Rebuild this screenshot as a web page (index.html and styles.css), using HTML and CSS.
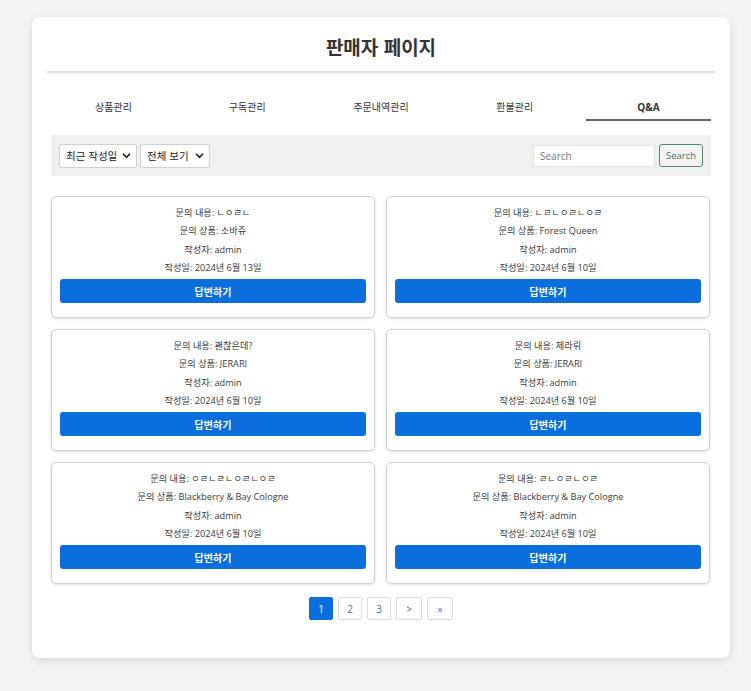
FILE: index.html
```html
<!DOCTYPE html>
<html lang="ko">
<head>
<meta charset="utf-8">
<title>판매자 페이지</title>
<link rel="stylesheet" href="styles.css">
</head>
<body>
<div class="page">
  <h1 class="title">판매자 페이지</h1>
  <hr class="divider">
  <nav class="tabs">
    <a class="tab">상품관리</a>
    <a class="tab">구독관리</a>
    <a class="tab">주문내역관리</a>
    <a class="tab">환불관리</a>
    <a class="tab active">Q&amp;A</a>
  </nav>
  <div class="filters">
    <div class="selects">
      <div class="select sel-date">최근 작성일<svg viewBox="0 0 10 8" class="chev"><path d="M1 2l4 4 4-4" fill="none" stroke="#222" stroke-width="2"/></svg></div>
      <div class="select sel-all">전체 보기<svg viewBox="0 0 10 8" class="chev"><path d="M1 2l4 4 4-4" fill="none" stroke="#222" stroke-width="2"/></svg></div>
    </div>
    <div class="search">
      <div class="search-input">Search</div>
      <button class="search-btn">Search</button>
    </div>
  </div>
  <div class="cards">
    <div class="card">
      <p>문의 내용: ㄴㅇㄹㄴ</p>
      <p>문의 상품: 소바쥬</p>
      <p>작성자: admin</p>
      <p>작성일: 2024년 6월 13일</p>
      <button class="answer">답변하기</button>
    </div>
    <div class="card">
      <p>문의 내용: ㄴㄹㄴㅇㄹㄴㅇㄹ</p>
      <p>문의 상품: Forest Queen</p>
      <p>작성자: admin</p>
      <p>작성일: 2024년 6월 10일</p>
      <button class="answer">답변하기</button>
    </div>
    <div class="card">
      <p>문의 내용: 괜찮은데?</p>
      <p>문의 상품: JERARI</p>
      <p>작성자: admin</p>
      <p>작성일: 2024년 6월 10일</p>
      <button class="answer">답변하기</button>
    </div>
    <div class="card">
      <p>문의 내용: 제라뤼</p>
      <p>문의 상품: JERARI</p>
      <p>작성자: admin</p>
      <p>작성일: 2024년 6월 10일</p>
      <button class="answer">답변하기</button>
    </div>
    <div class="card">
      <p>문의 내용: ㅇㄹㄴㄹㄴㅇㄹㄴㅇㄹ</p>
      <p>문의 상품: Blackberry &amp; Bay Cologne</p>
      <p>작성자: admin</p>
      <p>작성일: 2024년 6월 10일</p>
      <button class="answer">답변하기</button>
    </div>
    <div class="card">
      <p>문의 내용: ㄹㄴㅇㄹㄴㅇㄹ</p>
      <p>문의 상품: Blackberry &amp; Bay Cologne</p>
      <p>작성자: admin</p>
      <p>작성일: 2024년 6월 10일</p>
      <button class="answer">답변하기</button>
    </div>
  </div>
  <div class="pager">
    <a class="pg active">1</a>
    <a class="pg">2</a>
    <a class="pg">3</a>
    <a class="pg wide">&gt;</a>
    <a class="pg wide">»</a>
  </div>
</div>
</body>
</html>
```
FILE: styles.css
```css
* { box-sizing: border-box; }
html, body { margin: 0; padding: 0; }
body {
  background: #f3f4f6;
  font-family: "Open Sans", "Noto Sans CJK KR", sans-serif;
  color: #333;
  width: 751px;
  height: 691px;
  overflow: hidden;
}
.page {
  margin: 17px 0 0 32px;
  width: 698px;
  height: 641px;
  background: #fff;
  border-radius: 8px;
  box-shadow: 0 3px 10px rgba(0,0,0,0.12);
  padding: 0 19px;
}
.title {
  margin: 0;
  padding-top: 17px;
  height: 54px;
  text-align: center;
  font-family: "Noto Sans CJK KR", sans-serif;
  font-size: 19px;
  font-weight: 700;
  color: #333;
  line-height: 26px;
}
.divider {
  margin: 0 -4px;
  border: 0;
  height: 2px;
  background: #e2e2e2;
  box-shadow: 0 1px 2px rgba(0,0,0,0.08);
}
.tabs {
  display: flex;
  justify-content: space-between;
  margin-top: 27px;
}
.tab {
  width: 125px;
  text-align: center;
  font-family: "Noto Sans CJK KR", sans-serif;
  font-size: 10px;
  color: #333;
  line-height: 14px;
  padding-bottom: 5px;
  border-bottom: 2px solid transparent;
}
.tab.active {
  font-family: "Open Sans", sans-serif;
  font-weight: 700;
  border-bottom-color: #666;
}
.filters {
  margin-top: 14px;
  height: 41px;
  background: #f0f0f0;
  display: flex;
  align-items: center;
  justify-content: space-between;
  padding: 0 8px;
}
.selects { display: flex; gap: 3px; }
.select {
  height: 24px;
  background: #fff;
  border: 1px solid #cfcfcf;
  border-radius: 2px;
  display: flex;
  align-items: center;
  justify-content: space-between;
  padding: 0 5px 0 6px;
  font-family: "Noto Sans CJK KR", sans-serif;
  font-size: 10.5px;
  color: #222;
}
.sel-date { width: 78px; }
.sel-all { width: 70px; }
.chev { width: 9px; height: 7px; }
.search { display: flex; gap: 4px; align-items: center; }
.search-input {
  width: 122px;
  height: 22px;
  background: #fff;
  border: 1px solid #e4e4e4;
  font-size: 10px;
  color: #777;
  line-height: 20px;
  padding-left: 6px;
}
.search-btn {
  width: 44px;
  height: 23px;
  background: #f4f4f4;
  border: 1px solid #4e8a6c;
  border-radius: 3px;
  color: #4d6e5e;
  font-family: "Open Sans", sans-serif;
  font-size: 9.5px;
  padding: 0;
}
.cards {
  margin-top: 20px;
  display: grid;
  grid-template-columns: 324px 324px;
  column-gap: 11px;
  row-gap: 11px;
}
.card {
  height: 122px;
  border: 1px solid #cfcfcf;
  border-radius: 5px;
  box-shadow: 0 1px 3px rgba(0,0,0,0.12);
  padding: 7px 8px 0;
  text-align: center;
  font-family: "Open Sans", "Noto Sans CJK KR", sans-serif;
  font-size: 9.2px;
  color: #3a3a3a;
}
.card p {
  margin: 0;
  line-height: 18.3px;
}
.answer {
  display: block;
  width: 100%;
  margin-top: 2px;
  height: 24px;
  border: 0;
  border-radius: 3px;
  background: #0a6fdd;
  color: #fff;
  font-family: "Noto Sans CJK KR", sans-serif;
  font-weight: 700;
  font-size: 10px;
  padding: 0;
}
.pager {
  margin-top: 13px;
  display: flex;
  justify-content: center;
  gap: 5px;
}
.pg {
  width: 24px;
  height: 23px;
  border: 1px solid #dcdcdc;
  border-radius: 2px;
  font-size: 10px;
  color: #3b6fb8;
  display: flex;
  align-items: center;
  justify-content: center;
  background: #fff;
}
.pg.wide { width: 26px; }
.pg.active {
  background: #0a6fdd;
  border-color: #0a6fdd;
  color: #fff;
}
```
